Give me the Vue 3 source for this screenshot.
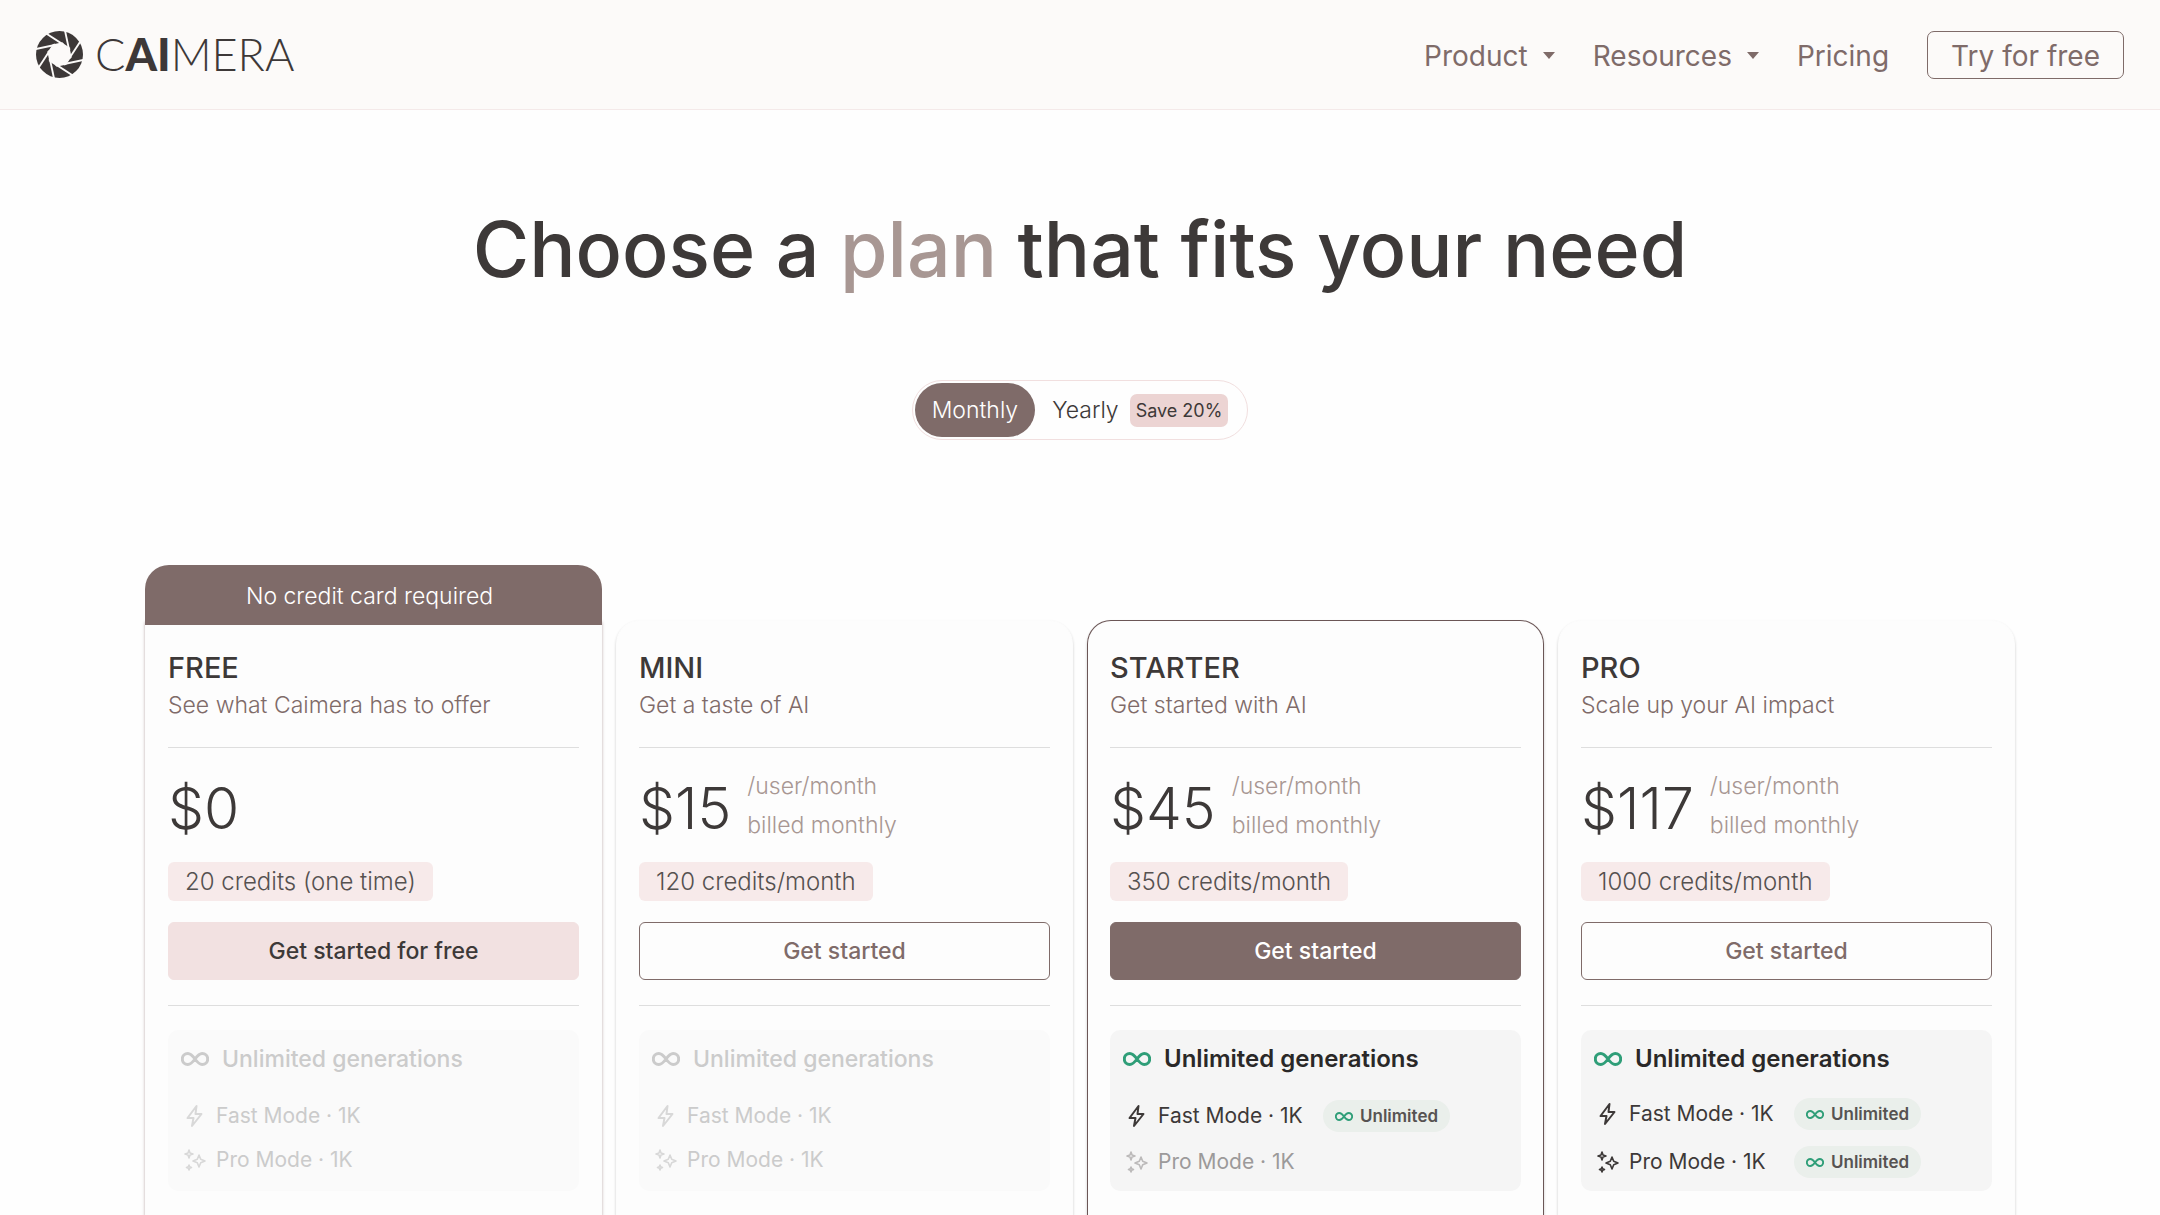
<script setup>
import { ref } from "vue";

const billing = ref("monthly");

const slits = [0, 45, 90, 135, 180, 225, 270, 315];

const plans = [
  {
    id: "free",
    name: "FREE",
    tagline: "See what Caimera has to offer",
    price: "$0",
    credits: "20 credits (one time)",
    action: "Get started for free",
    banner: "No credit card required",
    fast: false,
    pro: false,
  },
  {
    id: "mini",
    name: "MINI",
    tagline: "Get a taste of AI",
    price: "$15",
    perUser: true,
    credits: "120 credits/month",
    action: "Get started",
    fast: false,
    pro: false,
  },
  {
    id: "starter",
    name: "STARTER",
    tagline: "Get started with AI",
    price: "$45",
    perUser: true,
    credits: "350 credits/month",
    action: "Get started",
    fast: true,
    pro: false,
  },
  {
    id: "pro",
    name: "PRO",
    tagline: "Scale up your AI impact",
    price: "$117",
    perUser: true,
    credits: "1000 credits/month",
    action: "Get started",
    fast: true,
    pro: true,
  },
];
</script>

<template>
  <div class="page">
    <header class="navbar">
      <a href="#" class="logo">
        <svg class="logo-mark" viewBox="-50 -50 100 100">
          <circle r="50" fill="#3d3838" />
          <circle r="22" fill="#fcfaf9" />
          <g
            v-for="angle in slits"
            :key="angle"
            :transform="`rotate(${angle - 12})`"
          >
            <path d="M0 0L-9 -22L14 -22Z" fill="#fcfaf9" />
            <path d="M-50 -22L12 -22" stroke="#fcfaf9" stroke-width="4" />
          </g>
        </svg>
        <span class="logo-text">C<b>AI</b>MERA</span>
      </a>
      <nav class="nav-links">
        <button class="nav-item">
          Product
          <svg class="caret" viewBox="0 0 12 7"><path d="M0 0H12L6 7Z" /></svg>
        </button>
        <button class="nav-item">
          Resources
          <svg class="caret" viewBox="0 0 12 7"><path d="M0 0H12L6 7Z" /></svg>
        </button>
        <a href="#" class="nav-item">Pricing</a>
        <a href="#" class="try-button">Try for free</a>
      </nav>
    </header>

    <h1>Choose a <span>plan</span> that fits your need</h1>

    <div class="billing">
      <button
        :class="{ active: billing === 'monthly' }"
        @click="billing = 'monthly'"
      >
        Monthly
      </button>
      <button
        :class="{ active: billing === 'yearly' }"
        @click="billing = 'yearly'"
      >
        Yearly
        <span class="save">Save 20%</span>
      </button>
    </div>

    <main class="plans">
      <section v-for="plan in plans" :key="plan.id" class="card" :class="plan.id">
        <div v-if="plan.banner" class="banner">{{ plan.banner }}</div>
        <h2>{{ plan.name }}</h2>
        <p class="tagline">{{ plan.tagline }}</p>
        <hr />
        <div class="price">
          <span class="amount">{{ plan.price }}</span>
          <p v-if="plan.perUser">/user/month<br />billed monthly</p>
        </div>
        <span class="credits">{{ plan.credits }}</span>
        <button class="action">{{ plan.action }}</button>
        <hr />
        <div class="unlimited" :class="{ disabled: !plan.fast }">
          <h3>
            <svg class="infinity" viewBox="0 0 28 14">
              <path
                d="M14 7C11.500 3.500 9.500 1.500 6.800 1.500A5.500 5.500 0 0 0 6.800 12.500C9.500 12.500 11.500 10.500 14 7C16.500 3.500 18.500 1.500 21.200 1.500A5.500 5.500 0 0 1 21.200 12.500C18.500 12.500 16.500 10.500 14 7Z"
              />
            </svg>
            Unlimited generations
          </h3>
          <ul>
            <li :class="{ off: !plan.fast }">
              <svg class="mode-icon" viewBox="0 0 24 24">
                <path d="M13.500 2L4.500 14H10.500L9 22L18.500 10H12.500Z" />
              </svg>
              <span class="mode">Fast Mode · 1K</span>
              <span v-if="plan.fast" class="pill">
                <svg viewBox="0 0 28 14">
                  <path
                    d="M14 7C11.500 3.500 9.500 1.500 6.800 1.500A5.500 5.500 0 0 0 6.800 12.500C9.500 12.500 11.500 10.500 14 7C16.500 3.500 18.500 1.500 21.200 1.500A5.500 5.500 0 0 1 21.200 12.500C18.500 12.500 16.500 10.500 14 7Z"
                  />
                </svg>
                Unlimited
              </span>
            </li>
            <li :class="{ off: !plan.pro }">
              <svg class="mode-icon sparkles" viewBox="0 0 24 24">
                <path d="M16 7L17.700 11.300L22 13L17.700 14.700L16 19L14.300 14.700L10 13L14.300 11.300Z" />
                <path d="M6 2L7 5L10 6L7 7L6 10L5 7L2 6L5 5Z" />
                <path d="M6 17L6.700 18.800L8.500 19.500L6.700 20.200L6 22L5.300 20.200L3.500 19.500L5.300 18.800Z" />
              </svg>
              <span class="mode">Pro Mode · 1K</span>
              <span v-if="plan.pro" class="pill">
                <svg viewBox="0 0 28 14">
                  <path
                    d="M14 7C11.500 3.500 9.500 1.500 6.800 1.500A5.500 5.500 0 0 0 6.800 12.500C9.500 12.500 11.500 10.500 14 7C16.500 3.500 18.500 1.500 21.200 1.500A5.500 5.500 0 0 1 21.200 12.500C18.500 12.500 16.500 10.500 14 7Z"
                  />
                </svg>
                Unlimited
              </span>
            </li>
          </ul>
        </div>
      </section>
    </main>
  </div>
</template>

<style>
body {
  margin: 0;
  background-color: #fefefe;
}
</style>

<style scoped>
.page {
  display: flex;
  flex-direction: column;
  height: 100vh;
  overflow: hidden;
  font-family: Inter, "Liberation Sans", sans-serif;
  color: #3d3938;
}

.page * {
  box-sizing: border-box;
}

button {
  appearance: none;
  border: none;
  background: none;
  font-family: inherit;
  color: inherit;
  cursor: pointer;
}

a {
  color: inherit;
  text-decoration: none;
}

svg {
  flex-shrink: 0;
}

.navbar {
  display: flex;
  align-items: center;
  justify-content: space-between;
  flex-shrink: 0;
  height: 110px;
  padding: 0 36px;
  background-color: #fcfaf9;
  border-bottom: 1px solid #f4e9e9;
}

.logo {
  display: flex;
  align-items: center;
  gap: 12px;
}

.logo-mark {
  width: 47px;
  height: 47px;
}

.logo-text {
  font-family: Lato, sans-serif;
  font-size: 45px;
  font-weight: 300;
  line-height: 46px;
  padding-bottom: 2px;
  color: #3d3838;
}

.logo-text b {
  font-weight: 900;
}

.nav-links {
  display: flex;
  align-items: center;
  gap: 38px;
  color: #7f6b69;
}

.nav-item {
  display: flex;
  align-items: center;
  gap: 15px;
  padding: 2px 0 0;
  font-size: 28px;
  line-height: 40px;
}

.caret {
  width: 12px;
  height: 7px;
  fill: #7f6b69;
}

.try-button {
  padding: 2px 23px 0;
  border: 1px solid #7f6b69;
  border-radius: 7px;
  font-size: 28px;
  line-height: 44px;
}

h1 {
  flex-shrink: 0;
  margin: 94px 0 0;
  padding: 4px 0 6px;
  text-align: center;
  font-size: 77px;
  font-weight: 500;
  line-height: 82px;
}

h1 span {
  color: #a89793;
}

.billing {
  display: flex;
  flex-shrink: 0;
  align-self: center;
  margin-top: 84px;
  padding: 2px;
  border: 1px solid #f1dfdf;
  border-radius: 30px;
}

.billing button {
  display: flex;
  align-items: center;
  gap: 11px;
  height: 54px;
  padding: 0 17px;
  border-radius: 27px;
  font-size: 23px;
  font-weight: 300;
}

.billing button.active {
  background-color: #7f6b69;
  color: #fff;
}

.save {
  padding: 0 6px;
  border-radius: 7px;
  background-color: #ecd4d3;
  font-size: 18px;
  font-weight: 400;
  line-height: 33px;
}

.plans {
  display: grid;
  grid-template-columns: repeat(4, 1fr);
  gap: 14px;
  flex: 1;
  padding: 180px 145px 0;
}

.card {
  position: relative;
  display: flex;
  flex-direction: column;
  align-items: flex-start;
  padding: 27px 22px 0;
  border: 1px solid #fcfcfc;
  border-bottom: none;
  border-radius: 24px 24px 0 0;
  background-color: #fdfdfd;
  box-shadow: 0 2px 3px rgba(0, 0, 0, 0.2);
}

.card.free {
  border-radius: 0;
  box-shadow: 0 2px 3px rgba(90, 50, 50, 0.4);
}

.card.starter {
  border-color: #6b5656;
}

.banner {
  position: absolute;
  top: -56px;
  left: -1px;
  right: -1px;
  border-radius: 24px 24px 0 0;
  background-color: #7f6b69;
  text-align: center;
  color: #fff;
  font-size: 23px;
  font-weight: 300;
  line-height: 58px;
  padding: 2px 8px 0 0;
}

h2 {
  margin: 0;
  font-size: 29px;
  font-weight: 500;
  line-height: 40px;
}

.tagline {
  margin: 0;
  font-size: 23px;
  font-weight: 300;
  line-height: 34px;
  color: #7f6b69;
}

hr {
  width: 100%;
  height: 1px;
  margin: 25px 0 0;
  border: none;
  background-color: #dedede;
}

.price {
  display: flex;
  align-items: center;
  gap: 16px;
  height: 80px;
  margin-top: 20px;
}

.amount {
  font-size: 57px;
  font-weight: 300;
}

.price p {
  margin: 0 0 4px;
  font-size: 23px;
  font-weight: 300;
  line-height: 39px;
  color: #a89793;
}

.credits {
  margin-top: 14px;
  padding: 0 17px;
  border-radius: 6px;
  background-color: #f7eaea;
  font-size: 24px;
  font-weight: 300;
  line-height: 39px;
  color: #555150;
}

.action {
  width: 100%;
  height: 58px;
  margin-top: 21px;
  border: 1px solid #7f6b69;
  border-radius: 6px;
  font-size: 23px;
  font-weight: 500;
  color: #7f6b69;
}

.free .action {
  border-color: #f2e1e1;
  background-color: #f2e1e1;
  color: #3d3938;
}

.starter .action {
  background-color: #7f6b69;
  color: #fff;
}

.unlimited {
  width: 100%;
  margin-top: 24px;
  padding: 13px;
  border-radius: 10px;
  background-color: #f5f5f5;
}

.unlimited.disabled {
  background-color: #fafafa;
}

h3 {
  display: flex;
  align-items: center;
  gap: 13px;
  margin: 0;
  font-size: 24px;
  font-weight: 600;
  line-height: 32px;
  color: #2a2828;
}

.disabled h3 {
  font-size: 23px;
  font-weight: 500;
  color: #cbcbcb;
}

.infinity {
  width: 28px;
  height: 14px;
  fill: none;
  stroke: #2f9e78;
  stroke-width: 3;
}

.disabled .infinity {
  stroke: #cbcbcb;
}

ul {
  display: flex;
  flex-direction: column;
  justify-content: center;
  gap: 16px;
  height: 80px;
  margin: 23px 0 0;
  padding: 0;
  list-style: none;
}

li {
  display: flex;
  align-items: center;
  padding-left: 2px;
  line-height: 28px;
}

.mode-icon {
  width: 24px;
  height: 24px;
  margin-right: 9px;
  fill: none;
  stroke: #3d3938;
  stroke-width: 2;
  stroke-linejoin: round;
}

.sparkles {
  stroke-width: 1.6;
}

.mode {
  width: 165px;
  font-size: 21px;
  white-space: nowrap;
}

.off .mode {
  color: #9c9a9a;
}

.off .mode-icon {
  stroke: #bcbaba;
}

.disabled .mode {
  color: #cbcbcb;
}

.disabled .mode-icon {
  stroke: #d8d8d8;
}

.pill {
  display: flex;
  align-items: center;
  gap: 7px;
  padding: 0 12px;
  border-radius: 16px;
  background-color: #eaefeb;
  font-size: 17px;
  font-weight: 600;
  line-height: 32px;
  color: #575352;
}

.pill svg {
  width: 18px;
  height: 9px;
  fill: none;
  stroke: #2f9e78;
  stroke-width: 3;
}
</style>
